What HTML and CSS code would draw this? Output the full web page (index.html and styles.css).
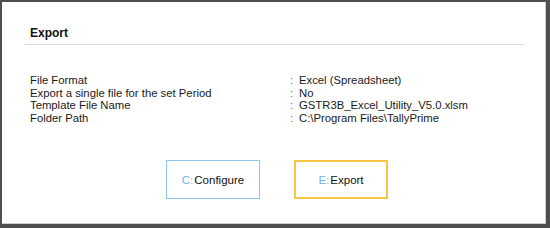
FILE: index.html
```html
<!DOCTYPE html>
<html lang="en">
<head>
  <meta charset="UTF-8">
  <title>Export</title>
  <link rel="stylesheet" href="styles.css">
</head>
<body>

  <div class="dialog">
    <div class="dialog-title">Export</div>

    <div class="details">
      <div class="label">File Format</div>
      <div class="colon">:</div>
      <div class="value">Excel (Spreadsheet)</div>

      <div class="label">Export a single file for the set Period</div>
      <div class="colon">:</div>
      <div class="value">No</div>

      <div class="label">Template File Name</div>
      <div class="colon">:</div>
      <div class="value">GSTR3B_Excel_Utility_V5.0.xlsm</div>

      <div class="label">Folder Path</div>
      <div class="colon">:</div>
      <div class="value">C:\Program Files\TallyPrime</div>
    </div>

    <div class="actions">
      <div class="btn btn-configure"><span class="key">C:</span>Configure</div>
      <div class="btn btn-export"><span class="key">E:</span>Export</div>
    </div>
  </div>

</body>
</html>
```

FILE: styles.css
```css
body {
  margin: 0;
  font-family: 'Liberation Sans', Arial, sans-serif;
  background: #fff;
  color: #1a1a1a;
}

.dialog {
  width: 550px;
  height: 228px;
  box-sizing: border-box;
  border: 2px solid #4f4f4f;
  border-right-width: 4px;
  border-bottom-width: 4px;
  box-shadow: inset -1px -1px 0 #cfcfcf;
  padding: 23px 21px 0 23px;
}

.dialog-title {
  font-size: 12px;
  font-weight: bold;
  line-height: 16px;
  padding: 0 0 3px 5px;
  border-bottom: 1px solid #dadada;
  color: #111;
}

.details {
  display: grid;
  grid-template-columns: 260px 9px 1fr;
  margin-top: 29px;
  padding-left: 5px;
  font-size: 11.3px;
  line-height: 12.5px;
}

.colon {
  color: #777;
}

.actions {
  display: flex;
  justify-content: center;
  gap: 34px;
  margin-top: 36px;
  padding-left: 4px;
}

.btn {
  width: 94px;
  height: 39px;
  box-sizing: border-box;
  display: flex;
  align-items: center;
  justify-content: center;
  font-size: 11.5px;
  color: #111;
}

.btn .key {
  color: #6fb4e6;
  margin-right: 1px;
}

.btn-configure {
  border: 1px solid #8ec6ee;
}

.btn-export {
  border: 2px solid #f6c744;
}
```
